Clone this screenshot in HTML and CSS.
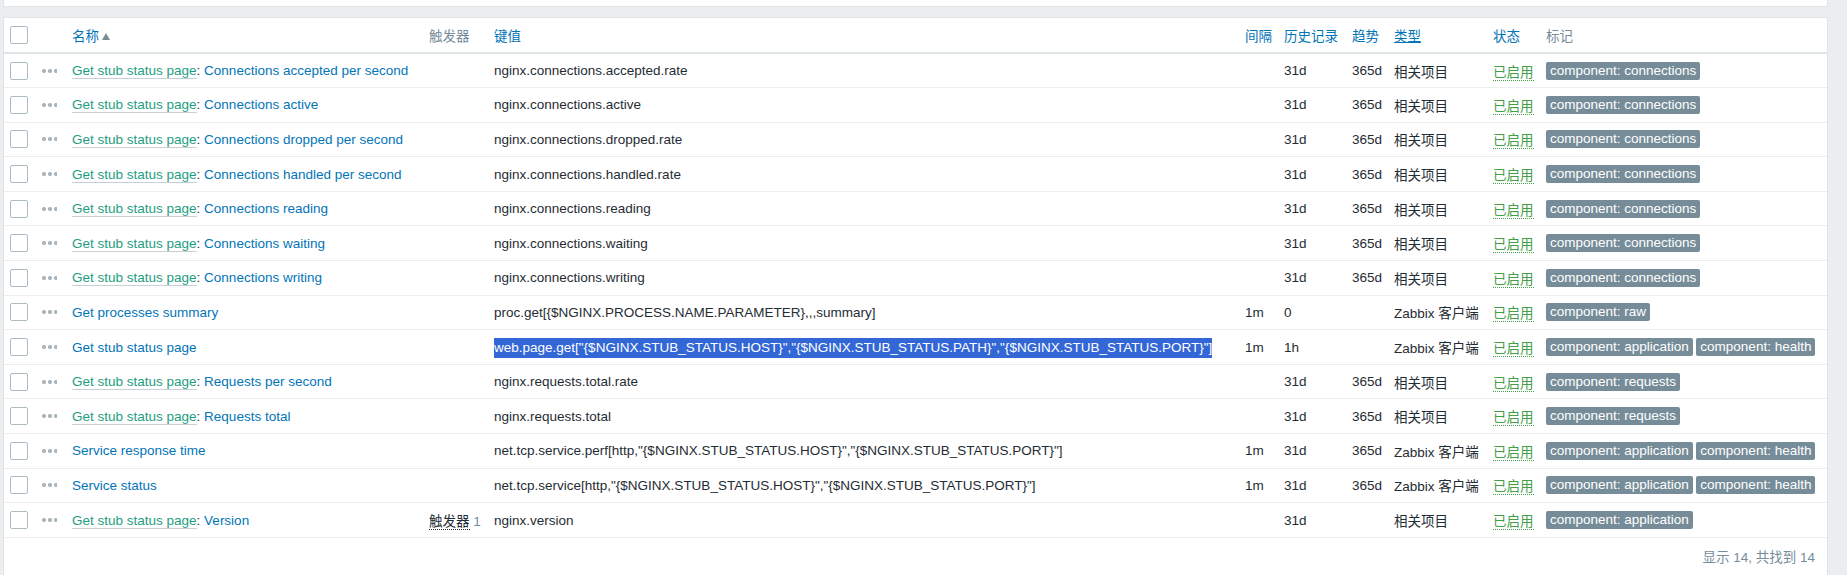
FILE: index.html
```html
<!DOCTYPE html>
<html lang="zh-CN">
<head>
    <meta charset="UTF-8">
    <meta name="viewport" content="width=device-width, initial-scale=1.0">
    <title>监控项</title>
    <link rel="stylesheet" href="styles.css">
</head>
<body>
    <div class="wrapper">
        <!-- Filter panel (collapsed) -->
        <div class="filter-panel"></div>

        <!-- Items list -->
        <div class="list-panel">
            <table class="list-table">
                <colgroup>
                    <col class="col-check">
                    <col class="col-menu">
                    <col class="col-name">
                    <col class="col-triggers">
                    <col class="col-key">
                    <col class="col-delay">
                    <col class="col-history">
                    <col class="col-trends">
                    <col class="col-type">
                    <col class="col-status">
                    <col>
                </colgroup>
                <thead>
                    <tr>
                        <th><span class="checkbox"></span></th>
                        <th></th>
                        <th><a class="sort">名称</a><span class="arrow-up"></span></th>
                        <th class="muted">触发器</th>
                        <th><a class="sort">键值</a></th>
                        <th><a class="sort">间隔</a></th>
                        <th><a class="sort">历史记录</a></th>
                        <th><a class="sort">趋势</a></th>
                        <th><a class="sort hover">类型</a></th>
                        <th><a class="sort">状态</a></th>
                        <th class="muted">标记</th>
                    </tr>
                </thead>
                <tbody>
                    <tr>
                        <td><span class="checkbox"></span></td>
                        <td><span class="menu-dots"></span></td>
                        <td><a class="parent">Get stub status page</a>: <a class="link">Connections accepted per second</a></td>
                        <td></td>
                        <td>nginx.connections.accepted.rate</td>
                        <td></td>
                        <td>31d</td>
                        <td>365d</td>
                        <td>相关项目</td>
                        <td><span class="status">已启用</span></td>
                        <td><span class="tag">component: connections</span></td>
                    </tr>
                    <tr>
                        <td><span class="checkbox"></span></td>
                        <td><span class="menu-dots"></span></td>
                        <td><a class="parent">Get stub status page</a>: <a class="link">Connections active</a></td>
                        <td></td>
                        <td>nginx.connections.active</td>
                        <td></td>
                        <td>31d</td>
                        <td>365d</td>
                        <td>相关项目</td>
                        <td><span class="status">已启用</span></td>
                        <td><span class="tag">component: connections</span></td>
                    </tr>
                    <tr>
                        <td><span class="checkbox"></span></td>
                        <td><span class="menu-dots"></span></td>
                        <td><a class="parent">Get stub status page</a>: <a class="link">Connections dropped per second</a></td>
                        <td></td>
                        <td>nginx.connections.dropped.rate</td>
                        <td></td>
                        <td>31d</td>
                        <td>365d</td>
                        <td>相关项目</td>
                        <td><span class="status">已启用</span></td>
                        <td><span class="tag">component: connections</span></td>
                    </tr>
                    <tr>
                        <td><span class="checkbox"></span></td>
                        <td><span class="menu-dots"></span></td>
                        <td><a class="parent">Get stub status page</a>: <a class="link">Connections handled per second</a></td>
                        <td></td>
                        <td>nginx.connections.handled.rate</td>
                        <td></td>
                        <td>31d</td>
                        <td>365d</td>
                        <td>相关项目</td>
                        <td><span class="status">已启用</span></td>
                        <td><span class="tag">component: connections</span></td>
                    </tr>
                    <tr>
                        <td><span class="checkbox"></span></td>
                        <td><span class="menu-dots"></span></td>
                        <td><a class="parent">Get stub status page</a>: <a class="link">Connections reading</a></td>
                        <td></td>
                        <td>nginx.connections.reading</td>
                        <td></td>
                        <td>31d</td>
                        <td>365d</td>
                        <td>相关项目</td>
                        <td><span class="status">已启用</span></td>
                        <td><span class="tag">component: connections</span></td>
                    </tr>
                    <tr>
                        <td><span class="checkbox"></span></td>
                        <td><span class="menu-dots"></span></td>
                        <td><a class="parent">Get stub status page</a>: <a class="link">Connections waiting</a></td>
                        <td></td>
                        <td>nginx.connections.waiting</td>
                        <td></td>
                        <td>31d</td>
                        <td>365d</td>
                        <td>相关项目</td>
                        <td><span class="status">已启用</span></td>
                        <td><span class="tag">component: connections</span></td>
                    </tr>
                    <tr>
                        <td><span class="checkbox"></span></td>
                        <td><span class="menu-dots"></span></td>
                        <td><a class="parent">Get stub status page</a>: <a class="link">Connections writing</a></td>
                        <td></td>
                        <td>nginx.connections.writing</td>
                        <td></td>
                        <td>31d</td>
                        <td>365d</td>
                        <td>相关项目</td>
                        <td><span class="status">已启用</span></td>
                        <td><span class="tag">component: connections</span></td>
                    </tr>
                    <tr>
                        <td><span class="checkbox"></span></td>
                        <td><span class="menu-dots"></span></td>
                        <td><a class="link">Get processes summary</a></td>
                        <td></td>
                        <td>proc.get[{$NGINX.PROCESS.NAME.PARAMETER},,,summary]</td>
                        <td>1m</td>
                        <td>0</td>
                        <td></td>
                        <td>Zabbix 客户端</td>
                        <td><span class="status">已启用</span></td>
                        <td><span class="tag">component: raw</span></td>
                    </tr>
                    <tr>
                        <td><span class="checkbox"></span></td>
                        <td><span class="menu-dots"></span></td>
                        <td><a class="link">Get stub status page</a></td>
                        <td></td>
                        <td><span class="selected">web.page.get["{$NGINX.STUB_STATUS.HOST}","{$NGINX.STUB_STATUS.PATH}","{$NGINX.STUB_STATUS.PORT}"]</span></td>
                        <td>1m</td>
                        <td>1h</td>
                        <td></td>
                        <td>Zabbix 客户端</td>
                        <td><span class="status">已启用</span></td>
                        <td><span class="tag">component: application</span><span class="tag">component: health</span></td>
                    </tr>
                    <tr>
                        <td><span class="checkbox"></span></td>
                        <td><span class="menu-dots"></span></td>
                        <td><a class="parent">Get stub status page</a>: <a class="link">Requests per second</a></td>
                        <td></td>
                        <td>nginx.requests.total.rate</td>
                        <td></td>
                        <td>31d</td>
                        <td>365d</td>
                        <td>相关项目</td>
                        <td><span class="status">已启用</span></td>
                        <td><span class="tag">component: requests</span></td>
                    </tr>
                    <tr>
                        <td><span class="checkbox"></span></td>
                        <td><span class="menu-dots"></span></td>
                        <td><a class="parent">Get stub status page</a>: <a class="link">Requests total</a></td>
                        <td></td>
                        <td>nginx.requests.total</td>
                        <td></td>
                        <td>31d</td>
                        <td>365d</td>
                        <td>相关项目</td>
                        <td><span class="status">已启用</span></td>
                        <td><span class="tag">component: requests</span></td>
                    </tr>
                    <tr>
                        <td><span class="checkbox"></span></td>
                        <td><span class="menu-dots"></span></td>
                        <td><a class="link">Service response time</a></td>
                        <td></td>
                        <td>net.tcp.service.perf[http,"{$NGINX.STUB_STATUS.HOST}","{$NGINX.STUB_STATUS.PORT}"]</td>
                        <td>1m</td>
                        <td>31d</td>
                        <td>365d</td>
                        <td>Zabbix 客户端</td>
                        <td><span class="status">已启用</span></td>
                        <td><span class="tag">component: application</span><span class="tag">component: health</span></td>
                    </tr>
                    <tr>
                        <td><span class="checkbox"></span></td>
                        <td><span class="menu-dots"></span></td>
                        <td><a class="link">Service status</a></td>
                        <td></td>
                        <td>net.tcp.service[http,"{$NGINX.STUB_STATUS.HOST}","{$NGINX.STUB_STATUS.PORT}"]</td>
                        <td>1m</td>
                        <td>31d</td>
                        <td>365d</td>
                        <td>Zabbix 客户端</td>
                        <td><span class="status">已启用</span></td>
                        <td><span class="tag">component: application</span><span class="tag">component: health</span></td>
                    </tr>
                    <tr>
                        <td><span class="checkbox"></span></td>
                        <td><span class="menu-dots"></span></td>
                        <td><a class="parent">Get stub status page</a>: <a class="link">Version</a></td>
                        <td><span class="trigger-link">触发器</span> <span class="count">1</span></td>
                        <td>nginx.version</td>
                        <td></td>
                        <td>31d</td>
                        <td></td>
                        <td>相关项目</td>
                        <td><span class="status">已启用</span></td>
                        <td><span class="tag">component: application</span></td>
                    </tr>
                </tbody>
            </table>
            <div class="table-stats">显示 14, 共找到 14</div>
        </div>
    </div>
</body>
</html>
```

FILE: styles.css
```css
* {
    margin: 0;
    padding: 0;
    box-sizing: border-box;
}

html, body {
    height: 100%;
    overflow: hidden;
}

body {
    font-family: 'Liberation Sans', Arial, 'Noto Sans CJK SC', sans-serif;
    font-size: 13.5px;
    color: #1f2c33;
    background: #ebeef0;
}

.wrapper {
    padding: 0 19px 0 3px;
}

/* Filter panel */
.filter-panel {
    height: 7px;
    background: white;
    border: 1px solid #dfe4e7;
    border-top: none;
}

/* List panel */
.list-panel {
    margin-top: 10px;
    background: white;
    border: 1px solid #dfe4e7;
    border-bottom: none;
    min-height: 600px;
}

.list-table {
    width: 100%;
    border-collapse: collapse;
    table-layout: fixed;
}

.col-check { width: 31.5px; }
.col-menu { width: 31px; }
.col-name { width: 357px; }
.col-triggers { width: 65px; }
.col-key { width: 751px; }
.col-delay { width: 39px; }
.col-history { width: 68px; }
.col-trends { width: 42px; }
.col-type { width: 99px; }
.col-status { width: 53px; }

.list-table th {
    height: 35px;
    padding: 0 5.5px;
    text-align: left;
    font-weight: normal;
    border-bottom: 2px solid #dfe4e7;
    white-space: nowrap;
}

.list-table th.muted {
    color: #768d99;
}

.list-table td {
    height: 34.6px;
    padding: 0 5.5px;
    border-bottom: 1px solid #ebeef0;
    white-space: nowrap;
    vertical-align: middle;
}

.list-table th:first-child,
.list-table td:first-child {
    padding-left: 6px;
}

.sort {
    color: #0275b8;
    text-decoration: none;
}

.sort.hover {
    text-decoration: underline;
}

.arrow-up {
    display: inline-block;
    margin-left: 3px;
    width: 0;
    height: 0;
    border-left: 4px solid transparent;
    border-right: 4px solid transparent;
    border-bottom: 7px solid #768d99;
    vertical-align: 1px;
}

/* Checkbox */
.checkbox {
    display: block;
    width: 18px;
    height: 18px;
    border: 1px solid #acbbc2;
    border-radius: 2px;
    background: white;
}

/* Action menu dots */
.menu-dots {
    display: block;
    width: 16px;
    height: 4px;
    background: radial-gradient(circle, #aab6bd 2px, transparent 2.2px) 0 0 / 6px 4px repeat-x;
}

/* Links */
.link {
    color: #0275b8;
    text-decoration: none;
}

.parent {
    color: #1e9e80;
    text-decoration: none;
    border-bottom: 1px solid #c8d0d4;
}

.trigger-link {
    border-bottom: 1px dotted #1f2c33;
}

.count {
    color: #768d99;
}

.selected {
    background: #3367d6;
    color: white;
    padding: 2px 0 3px;
}

.status {
    color: #429e47;
    border-bottom: 1px dotted #429e47;
}

/* Tags */
.tag {
    display: inline-block;
    background: #768d99;
    color: white;
    border-radius: 2px;
    padding: 0 4px;
    line-height: 18px;
    margin-right: 3.5px;
}

.table-stats {
    text-align: right;
    color: #768d99;
    padding: 8px 12px;
}
```
